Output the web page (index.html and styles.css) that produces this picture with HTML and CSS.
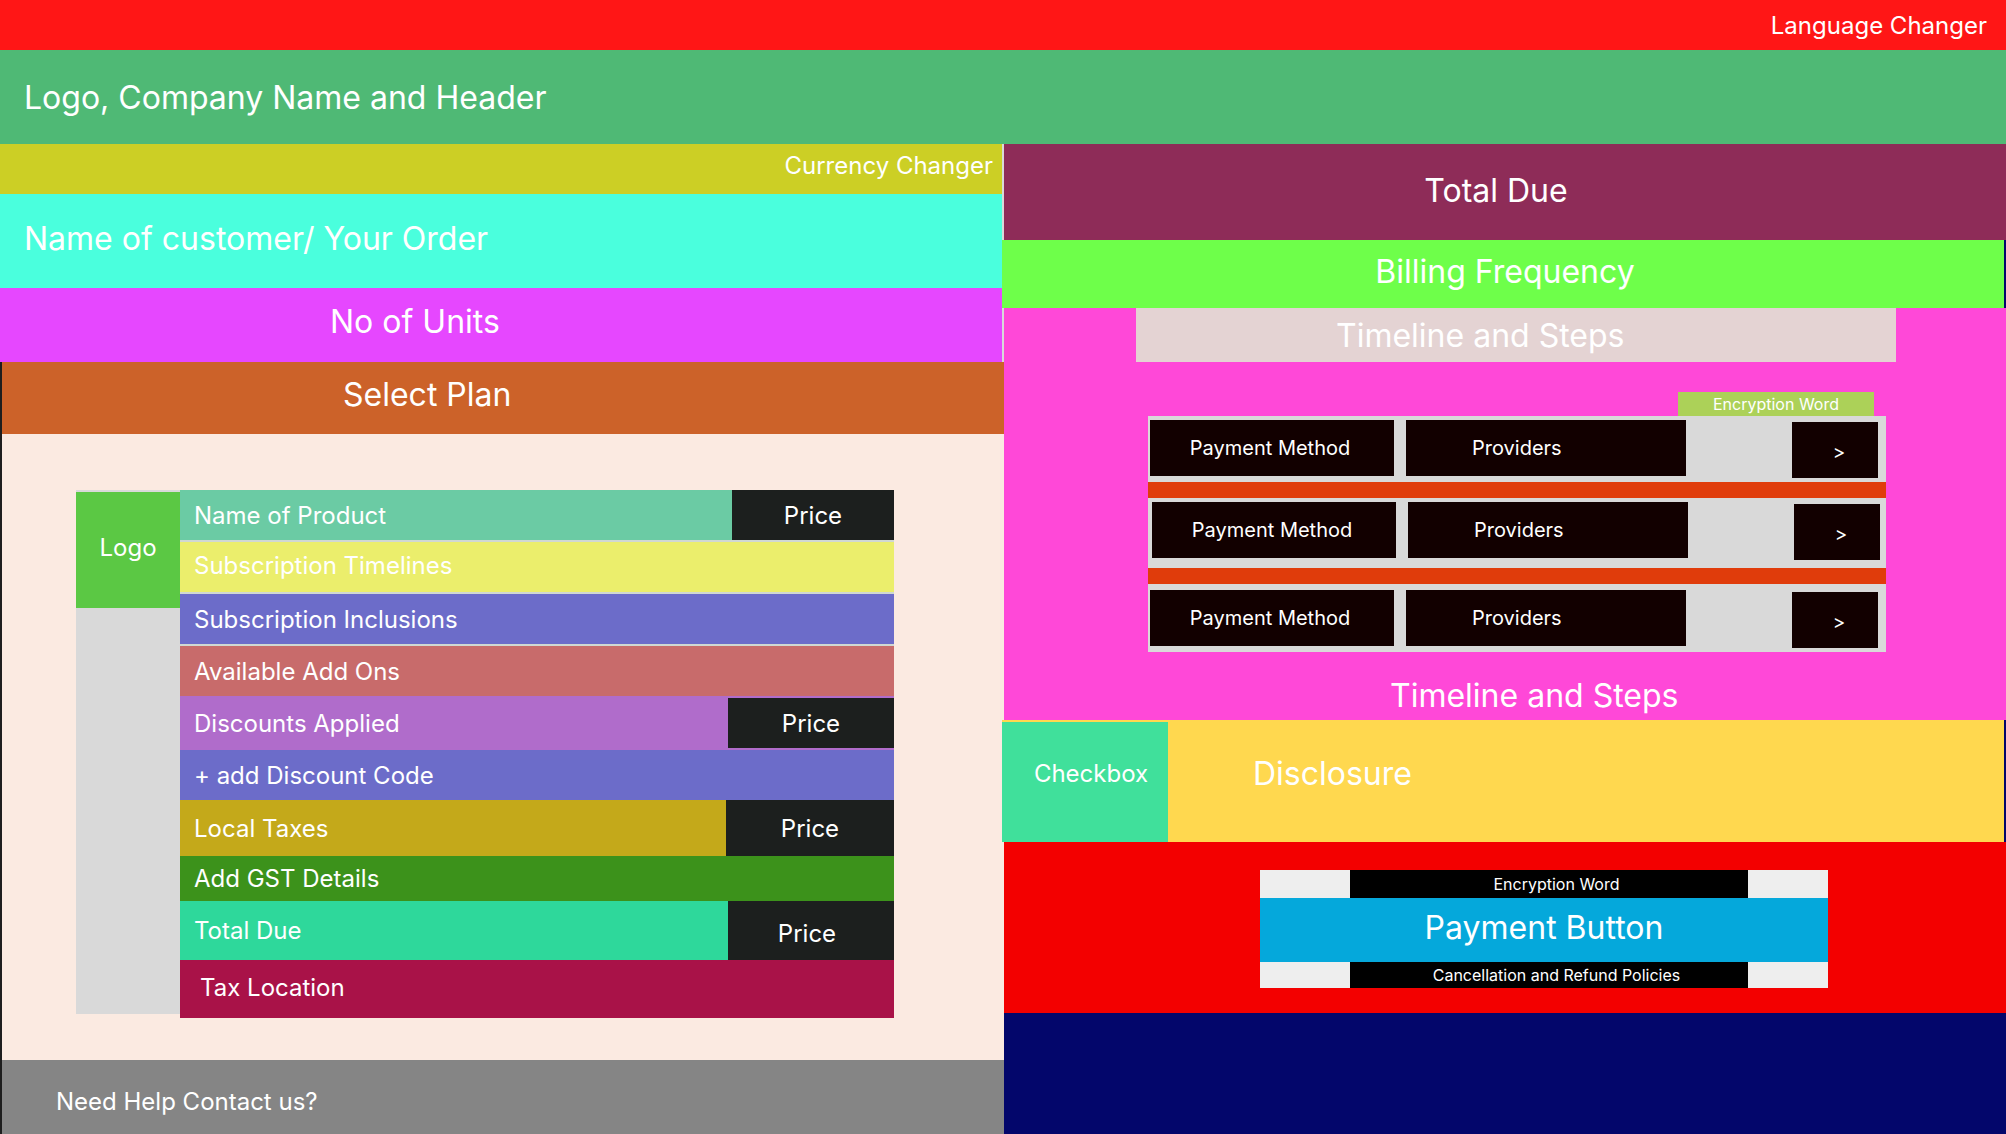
FILE: index.html
```html
<!DOCTYPE html>
<html lang="en">
<head>
<meta charset="utf-8">
<title>Checkout Wireframe</title>
<link rel="stylesheet" href="styles.css">
</head>
<body>
<div class="topbar">Language Changer</div>
<div class="header">Logo, Company Name and Header</div>
<div class="main">
  <div class="left">
    <div class="currency">Currency Changer</div>
    <div class="customer">Name of customer/ Your Order</div>
    <div class="units">No of Units</div>
    <div class="lower">
      <div class="select-plan">Select Plan</div>
      <div class="plan-area">
        <div class="plan-card">
          <div class="logo-col"><div class="logo-box">Logo</div></div>
          <div class="rows">
            <div class="row r1"><span class="label">Name of Product</span><span class="price">Price</span></div>
            <div class="row r2"><span class="label">Subscription Timelines</span></div>
            <div class="row r3"><span class="label">Subscription Inclusions</span></div>
            <div class="row r4"><span class="label">Available Add Ons</span></div>
            <div class="row r5"><span class="label">Discounts Applied</span><span class="price">Price</span></div>
            <div class="row r6"><span class="label">+ add Discount Code</span></div>
            <div class="row r7"><span class="label">Local Taxes</span><span class="price">Price</span></div>
            <div class="row r8"><span class="label">Add GST Details</span></div>
            <div class="row r9"><span class="label">Total Due</span><span class="price">Price</span></div>
            <div class="row r10"><span class="label">Tax Location</span></div>
          </div>
        </div>
      </div>
      <div class="help">Need Help Contact us?</div>
    </div>
  </div>
  <div class="right">
    <div class="total">Total Due</div>
    <div class="billing">Billing Frequency</div>
    <div class="steps">
      <div class="steps-head">Timeline and Steps</div>
      <div class="enc-tag">Encryption Word</div>
      <div class="methods">
        <div class="pm-row m1">
          <div class="box pm">Payment Method</div>
          <div class="box prov">Providers</div>
          <div class="box arrow">&gt;</div>
        </div>
        <div class="sep"></div>
        <div class="pm-row m2">
          <div class="box pm">Payment Method</div>
          <div class="box prov">Providers</div>
          <div class="box arrow">&gt;</div>
        </div>
        <div class="sep"></div>
        <div class="pm-row m3">
          <div class="box pm">Payment Method</div>
          <div class="box prov">Providers</div>
          <div class="box arrow">&gt;</div>
        </div>
      </div>
      <div class="steps-foot">Timeline and Steps</div>
    </div>
    <div class="consent">
      <div class="checkbox">Checkbox</div>
      <div class="disclosure">Disclosure</div>
    </div>
    <div class="pay">
      <div class="pay-widget">
        <div class="pay-strip"><span class="pay-strip-text">Encryption Word</span></div>
        <div class="pay-btn">Payment Button</div>
        <div class="pay-strip bottom"><span class="pay-strip-text">Cancellation and Refund Policies</span></div>
      </div>
    </div>
    <div class="navy"></div>
  </div>
</div>
</body>
</html>
```

FILE: styles.css
```css
* {
  box-sizing: border-box;
  margin: 0;
  padding: 0;
}

html, body {
  width: 2006px;
  height: 1134px;
  overflow: hidden;
}

body {
  font-family: Inter, "Noto Sans", "Liberation Sans", sans-serif;
  color: #ffffff;
  background: #ffffff;
}

.topbar {
  height: 50px;
  background: #ff1616;
  display: flex;
  justify-content: flex-end;
  align-items: center;
  padding-right: 19px;
  font-size: 24px;
}

.header {
  height: 94px;
  background: #4fb975;
  display: flex;
  align-items: center;
  padding-left: 24px;
  font-size: 32px;
}

.main {
  display: flex;
  height: 990px;
}

/* ---------- left column ---------- */
.left {
  width: 1004px;
  display: flex;
  flex-direction: column;
  background: #d9d9d9;
}

.currency {
  width: 1002px;
  height: 50px;
  background: #cccf25;
  display: flex;
  justify-content: flex-end;
  align-items: center;
  padding-right: 9px;
  padding-bottom: 8px;
  font-size: 24px;
}

.customer {
  width: 1002px;
  height: 94px;
  background: #4affdd;
  display: flex;
  align-items: center;
  padding-left: 24px;
  padding-bottom: 5px;
  font-size: 32px;
}

.units {
  width: 1002px;
  height: 74px;
  background: #e647ff;
  display: flex;
  align-items: center;
  padding-left: 330px;
  padding-bottom: 7px;
  font-size: 32px;
}

.lower {
  flex: 1;
  display: flex;
  flex-direction: column;
  border-left: 2px solid #1e1e1e;
}

.select-plan {
  height: 72px;
  background: #cc6229;
  display: flex;
  align-items: center;
  padding-left: 341px;
  padding-bottom: 8px;
  font-size: 32px;
}

.plan-area {
  flex: 1;
  background: #fbeae1;
  padding: 56px 0 0 74px;
}

.help {
  height: 74px;
  background: #858585;
  display: flex;
  align-items: center;
  padding-left: 54px;
  padding-top: 8px;
  font-size: 24px;
}

.plan-card {
  display: flex;
  align-items: flex-start;
}

.logo-col {
  width: 104px;
  height: 524px;
  background: #d9d9d9;
  padding-top: 2px;
}

.logo-box {
  height: 116px;
  background: #5bc844;
  display: flex;
  align-items: center;
  justify-content: center;
  padding-bottom: 6px;
  font-size: 24px;
}

.rows {
  width: 714px;
  display: flex;
  flex-direction: column;
  background: #d0d8d2;
}

.row {
  display: flex;
  align-items: stretch;
  font-size: 24px;
}

.label {
  flex: 1;
  display: flex;
  align-items: center;
  padding-left: 14px;
}

.price {
  background: #1c1f1e;
  display: flex;
  align-items: center;
  justify-content: center;
}

.r1 { height: 50px; margin-bottom: 2px; background: #6bcba4; }
.r1 .price { width: 162px; }
.r2 { height: 50px; margin-bottom: 2px; background: #ebee6c; }
.r2 .label { padding-bottom: 3px; }
.r3 { height: 50px; margin-bottom: 2px; background: #6c6cc9; }
.r4 { height: 50px; background: #c86b6b; }
.r5 { height: 54px; background: #b06ccb; }
.r5 .price { width: 166px; margin: 2px 0; }
.r6 { height: 50px; background: #6c6cc9; }
.r7 { height: 56px; background: #c4a91a; }
.r7 .price { width: 168px; }
.r8 { height: 45px; background: #3c921b; }
.r9 { height: 59px; background: #2ed89b; }
.r9 .price { width: 166px; padding-top: 5px; padding-right: 8px; }
.r10 { height: 58px; background: #a91248; }
.r10 .label { padding-left: 20px; padding-bottom: 3px; }

/* ---------- right column ---------- */
.right {
  width: 1002px;
  display: flex;
  flex-direction: column;
}

.total {
  height: 96px;
  background: #8e2c58;
  display: flex;
  align-items: center;
  justify-content: center;
  padding-right: 18px;
  padding-bottom: 3px;
  font-size: 32px;
}

.billing {
  height: 68px;
  margin-left: -2px;
  background: #6eff4a;
  border-right: 2px solid #03066b;
  display: flex;
  align-items: center;
  justify-content: center;
  padding-left: 4px;
  padding-bottom: 6px;
  font-size: 32px;
}

.steps {
  height: 412px;
  background: #ff48d8;
  padding-left: 132px;
}

.steps-head {
  width: 760px;
  height: 54px;
  background: #e4d3d3;
  display: flex;
  align-items: center;
  padding-left: 200px;
  font-size: 32px;
}

.enc-tag {
  margin: 30px 0 0 542px;
  width: 196px;
  height: 24px;
  background: #acd158;
  display: flex;
  align-items: center;
  justify-content: center;
  font-size: 16px;
}

.methods {
  margin-left: 12px;
  width: 738px;
  background: #d9d9d9;
}

.pm-row {
  display: flex;
  align-items: flex-start;
  font-size: 20px;
}

.m1 { height: 66px; padding: 4px 0 0 2px; }
.m2 { height: 70px; padding: 4px 0 0 4px; }
.m3 { height: 68px; padding: 6px 0 0 2px; }

.box {
  height: 56px;
  background: #120000;
  display: flex;
  align-items: center;
}

.pm {
  width: 244px;
  justify-content: center;
  padding-right: 4px;
}

.prov {
  width: 280px;
  margin-left: 12px;
  padding-left: 66px;
}

.arrow {
  width: 86px;
  margin-left: 106px;
  margin-top: 2px;
  justify-content: center;
  padding-top: 4px;
  padding-left: 8px;
  font-size: 19px;
}

.sep {
  height: 16px;
  background: #e03c0b;
}

.steps-foot {
  margin-top: 26px;
  padding-left: 254px;
  line-height: 36px;
  font-size: 32px;
}

.consent {
  height: 122px;
  margin-left: -2px;
  padding-top: 2px;
  background: #ffd84f;
  border-right: 2px solid #03066b;
  display: flex;
}

.checkbox {
  width: 166px;
  background: #40e09b;
  display: flex;
  align-items: center;
  justify-content: center;
  padding-left: 12px;
  padding-bottom: 17px;
  font-size: 24px;
}

.disclosure {
  flex: 1;
  display: flex;
  align-items: center;
  padding-left: 85px;
  padding-bottom: 18px;
  font-size: 32px;
}

.pay {
  height: 171px;
  background: #f30000;
  padding: 28px 0 0 256px;
}

.pay-widget {
  width: 568px;
}

.pay-strip {
  height: 28px;
  background: #eeeeee;
  padding: 0 80px 0 90px;
  display: flex;
}

.pay-strip.bottom {
  height: 26px;
}

.pay-strip-text {
  flex: 1;
  background: #000000;
  display: flex;
  align-items: center;
  justify-content: center;
  padding-left: 15px;
  font-size: 16px;
}

.pay-btn {
  height: 64px;
  background: #05a8db;
  display: flex;
  align-items: center;
  justify-content: center;
  padding-bottom: 6px;
  font-size: 32px;
}

.navy {
  flex: 1;
  background: #03066b;
}
```
